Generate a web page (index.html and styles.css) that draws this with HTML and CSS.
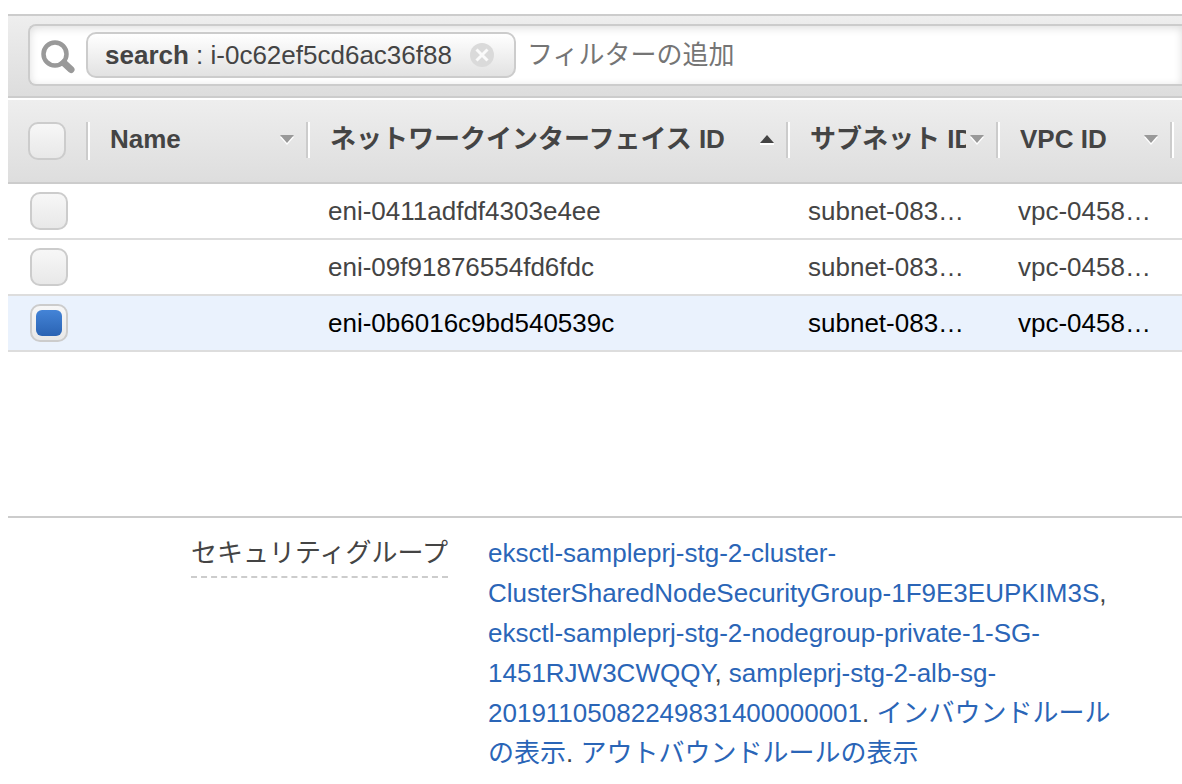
FILE: index.html
```html
<!DOCTYPE html>
<html lang="ja">
<head>
<meta charset="utf-8">
<meta name="viewport" content="width=device-width, initial-scale=1">
<title>ネットワークインターフェイス</title>
<link rel="stylesheet" href="styles.css">
</head>
<body>
<main class="console">
  <form class="toolbar" role="search">
    <div class="search-box">
      <svg class="search-icon" viewBox="0 0 38 38" aria-hidden="true">
        <circle cx="15" cy="15" r="11.5" fill="none" stroke="#999" stroke-width="4.500"/>
        <path d="M24 24L31 30.500" stroke="#999" stroke-width="7" stroke-linecap="round"/>
      </svg>
      <span class="chip">
        <span><b>search</b> : i-0c62ef5cd6ac36f88</span>
        <button class="chip-close" type="button" aria-label="フィルターを削除">
          <svg viewBox="0 0 24 24" aria-hidden="true">
            <circle cx="12" cy="12" r="12" fill="#dadada"/>
            <path d="M6.500 6.500L17.500 17.500M17.500 6.500L6.500 17.500" stroke="#fafafa" stroke-width="3"/>
          </svg>
        </button>
      </span>
      <input class="filter-input" type="text" placeholder="フィルターの追加" aria-label="フィルターの追加">
    </div>
  </form>

  <div class="grid">
    <table class="eni-table">
      <colgroup>
        <col class="col-check"><col class="col-name"><col class="col-eni"><col class="col-subnet"><col class="col-vpc"><col>
      </colgroup>
      <thead>
        <tr>
          <th><div class="head-cell head-check"><input class="check" type="checkbox" aria-label="すべて選択"></div></th>
          <th><button class="head-cell" type="button"><span class="head-text">Name</span><svg class="sort" viewBox="0 0 14 10" aria-hidden="true"><path d="M0 2H14L7 10Z" fill="#fff"/><path d="M0 0H14L7 8Z" fill="#999"/></svg></button></th>
          <th aria-sort="ascending"><button class="head-cell" type="button"><span class="head-text">ネットワークインターフェイス ID</span><svg class="sort" viewBox="0 0 14 10" aria-hidden="true"><path d="M0 8H14V10H0Z" fill="#fff"/><path d="M0 8H14L7 0Z" fill="#444"/></svg></button></th>
          <th><button class="head-cell" type="button"><span class="head-text">サブネット ID</span><svg class="sort" viewBox="0 0 14 10" aria-hidden="true"><path d="M0 2H14L7 10Z" fill="#fff"/><path d="M0 0H14L7 8Z" fill="#999"/></svg></button></th>
          <th><button class="head-cell" type="button"><span class="head-text">VPC ID</span><svg class="sort" viewBox="0 0 14 10" aria-hidden="true"><path d="M0 2H14L7 10Z" fill="#fff"/><path d="M0 0H14L7 8Z" fill="#999"/></svg></button></th>
          <th></th>
        </tr>
      </thead>
      <tbody>
        <tr>
          <td><input class="check" type="checkbox" aria-label="eni-0411adfdf4303e4ee"></td>
          <td></td><td>eni-0411adfdf4303e4ee</td><td>subnet-083…</td><td>vpc-0458…</td><td></td>
        </tr>
        <tr>
          <td><input class="check" type="checkbox" aria-label="eni-09f91876554fd6fdc"></td>
          <td></td><td>eni-09f91876554fd6fdc</td><td>subnet-083…</td><td>vpc-0458…</td><td></td>
        </tr>
        <tr class="selected">
          <td><input class="check" type="checkbox" aria-label="eni-0b6016c9bd540539c" checked></td>
          <td></td><td>eni-0b6016c9bd540539c</td><td>subnet-083…</td><td>vpc-0458…</td><td></td>
        </tr>
      </tbody>
    </table>
  </div>

  <dl class="details">
    <dt><span class="term">セキュリティグループ</span></dt>
    <dd><a href="#">eksctl-sampleprj-stg-2-cluster-ClusterSharedNodeSecurityGroup-1F9E3EUPKIM3S</a>, <a href="#">eksctl-sampleprj-stg-2-nodegroup-private-1-SG-1451RJW3CWQQY</a>, <a href="#">sampleprj-stg-2-alb-sg-20191105082249831400000001</a>. <a href="#">インバウンドルールの表示</a>. <a href="#">アウトバウンドルールの表示</a></dd>
  </dl>
</main>
</body>
</html>
```
FILE: styles.css
```css
* {
  box-sizing: border-box;
}

body {
  margin: 0;
  background: #fff;
  color: #444;
  font: 26px/40px "Liberation Sans", "Noto Sans CJK JP", sans-serif;
}

button,
input {
  margin: 0;
  padding: 0;
  border: 0;
  background: none;
  color: inherit;
  font: inherit;
}

.console {
  padding: 14px 0 0 8px;
}

.toolbar {
  margin: 0 0 2px;
  padding: 8px 0 10px 20px;
  border-top: 2px solid #ccc;
  border-bottom: 2px solid #ccc;
  background: linear-gradient(#eee, #ddd);
}

.search-box {
  display: flex;
  align-items: center;
  height: 62px;
  padding: 0 0 0 10px;
  border: 2px solid #ccc;
  border-right: 0;
  border-radius: 8px 0 0 8px;
  background: #fff;
  box-shadow: inset 0 2px 8px #ddd;
}

.search-icon {
  flex: none;
  width: 38px;
  height: 38px;
  margin: 6px 8px 0 0;
}

.chip {
  display: flex;
  flex: none;
  align-items: center;
  gap: 18px;
  height: 46px;
  padding: 0 20px 0 17px;
  border: 2px solid #ccc;
  border-radius: 10px;
  background: linear-gradient(#fff, #e2e2e2);
  white-space: nowrap;
}

.chip-close,
.chip-close svg {
  display: block;
  width: 24px;
  height: 24px;
}

.filter-input {
  flex: 1;
  min-width: 0;
  padding-left: 11px;
  outline: 0;
}

.filter-input::placeholder {
  color: #757575;
  opacity: 1;
}

.grid {
  min-height: 416px;
  overflow: hidden;
}

.eni-table {
  width: 100%;
  border-collapse: separate;
  border-spacing: 0;
  table-layout: fixed;
}

.col-check {
  width: 80px;
}

.col-name {
  width: 220px;
}

.col-eni {
  width: 480px;
}

.col-subnet {
  width: 210px;
}

.col-vpc {
  width: 174px;
}

.eni-table thead tr {
  background: linear-gradient(#eee, #ddd);
}

.eni-table th {
  height: 84px;
  padding: 22px 0 0;
  border-bottom: 2px solid #ccc;
  vertical-align: top;
}

.head-cell {
  display: flex;
  align-items: center;
  gap: 4px;
  width: 100%;
  height: 36px;
  padding: 0 12px 0 22px;
  border-right: 2px solid #ccc;
  box-shadow: 2px 0 #fff;
  font-weight: bold;
  text-align: left;
}

.head-check {
  height: 38px;
  padding-left: 20px;
}

.head-text {
  flex: 1;
  min-width: 0;
  padding-bottom: 2px;
  overflow: hidden;
  white-space: nowrap;
}

.sort {
  flex: none;
  width: 14px;
  height: 10px;
}

.eni-table td {
  height: 56px;
  padding: 0 20px;
  overflow: hidden;
  border-bottom: 2px solid #ddd;
  white-space: nowrap;
}

.eni-table td:first-child {
  padding: 0 22px;
}

.eni-table td:last-child {
  padding: 0;
}

.selected {
  background: #eaf2fd;
  color: #000;
}

.check {
  display: block;
  flex: none;
  width: 38px;
  height: 38px;
  padding: 4px;
  appearance: none;
  border: 2px solid #ccc;
  border-radius: 10px;
  background: linear-gradient(#f7f7f7, #e8e8e8);
}

.check:checked::before {
  display: block;
  width: 26px;
  height: 26px;
  border-radius: 6px;
  background: linear-gradient(#4484d7, #2a63b3);
  content: "";
}

.details {
  display: grid;
  grid-template-columns: 440px 1fr;
  column-gap: 40px;
  margin: 0;
  padding: 15px 54px 10px 0;
  border-top: 2px solid #ccc;
}

.details dt {
  text-align: right;
}

.term {
  display: inline-block;
  padding-bottom: 3px;
  border-bottom: 2px dashed #ccc;
}

.details dd {
  margin: 0;
  overflow-wrap: break-word;
}

.details a {
  color: #2a65b7;
  text-decoration: none;
}
```
